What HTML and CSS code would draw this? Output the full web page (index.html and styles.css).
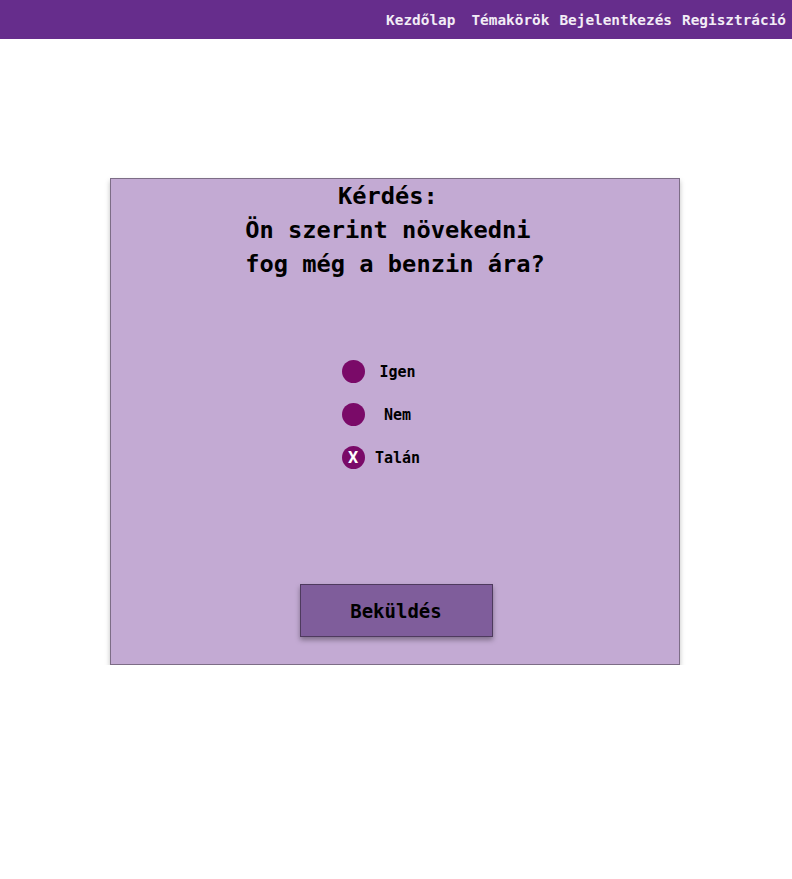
FILE: index.html
```html
<!DOCTYPE html>
<html lang="hu">
<head>
<meta charset="utf-8">
<title>Kérdés</title>
<link rel="stylesheet" href="styles.css">
</head>
<body>
<nav class="nav">
  <a class="nav-link" href="#">Kezdőlap</a>
  <a class="nav-link" href="#">Témakörök</a>
  <a class="nav-link" href="#">Bejelentkezés</a>
  <a class="nav-link" href="#">Regisztráció</a>
</nav>
<main class="page">
  <form class="card">
    <h1 class="question">Kérdés:&nbsp;<br>Ön szerint növekedni&nbsp;<br>fog még a benzin ára?</h1>
    <div class="options">
      <label class="option"><span class="dot"></span><span class="option-text">Igen</span></label>
      <label class="option"><span class="dot"></span><span class="option-text">Nem</span></label>
      <label class="option"><span class="dot checked">X</span><span class="option-text">Talán</span></label>
    </div>
    <button class="submit" type="button">Beküldés</button>
  </form>
</main>
</body>
</html>
```
FILE: styles.css
```css
* { box-sizing: border-box; }
body {
  margin: 0;
  font-family: "DejaVu Sans Mono", "Liberation Mono", monospace;
  font-weight: bold;
  color: #000;
  background: #fff;
}
.nav {
  height: 39px;
  background: #662d8c;
  display: flex;
  justify-content: flex-end;
  align-items: center;
  padding-right: 1px;
}
.nav-link {
  color: #f2ecf6;
  text-decoration: none;
  font-size: 14.4px;
  padding: 0 5px;
}
.nav-link:first-child { margin-right: 6px; }
.page {
  padding-top: 139px;
  display: flex;
  justify-content: center;
}
.card {
  width: 570px;
  height: 487px;
  margin-left: -2px;
  background: #c3aad3;
  border: 1px solid #7d6d86;
  box-shadow: 0 3px 5px rgba(0,0,0,0.25);
  display: flex;
  flex-direction: column;
  align-items: center;
}
.question {
  margin: 0;
  font-size: 23.7px;
  line-height: 34px;
  text-align: center;
  font-weight: bold;
}
.options {
  margin-top: 79px;
  display: flex;
  flex-direction: column;
  gap: 20px;
}
.option {
  display: flex;
  align-items: center;
  font-size: 15px;
  padding-right: 18px;
}
.dot {
  width: 23px;
  height: 23px;
  border-radius: 50%;
  background: #7a0a68;
  color: #fff;
  display: flex;
  align-items: center;
  justify-content: center;
  font-size: 16px;
  font-family: "Roboto", sans-serif;
  font-weight: bold;
}
.option-text {
  width: 66px;
  text-align: center;
}
.submit {
  margin-top: auto;
  margin-bottom: 27px;
  margin-left: 2px;
  width: 193px;
  height: 53px;
  background: #7f5d9b;
  border: 1px solid #4e3a5e;
  box-shadow: 0 3px 5px rgba(0,0,0,0.35);
  font-family: "DejaVu Sans Mono", "Liberation Mono", monospace;
  font-weight: bold;
  font-size: 19px;
  color: #000;
}
```
